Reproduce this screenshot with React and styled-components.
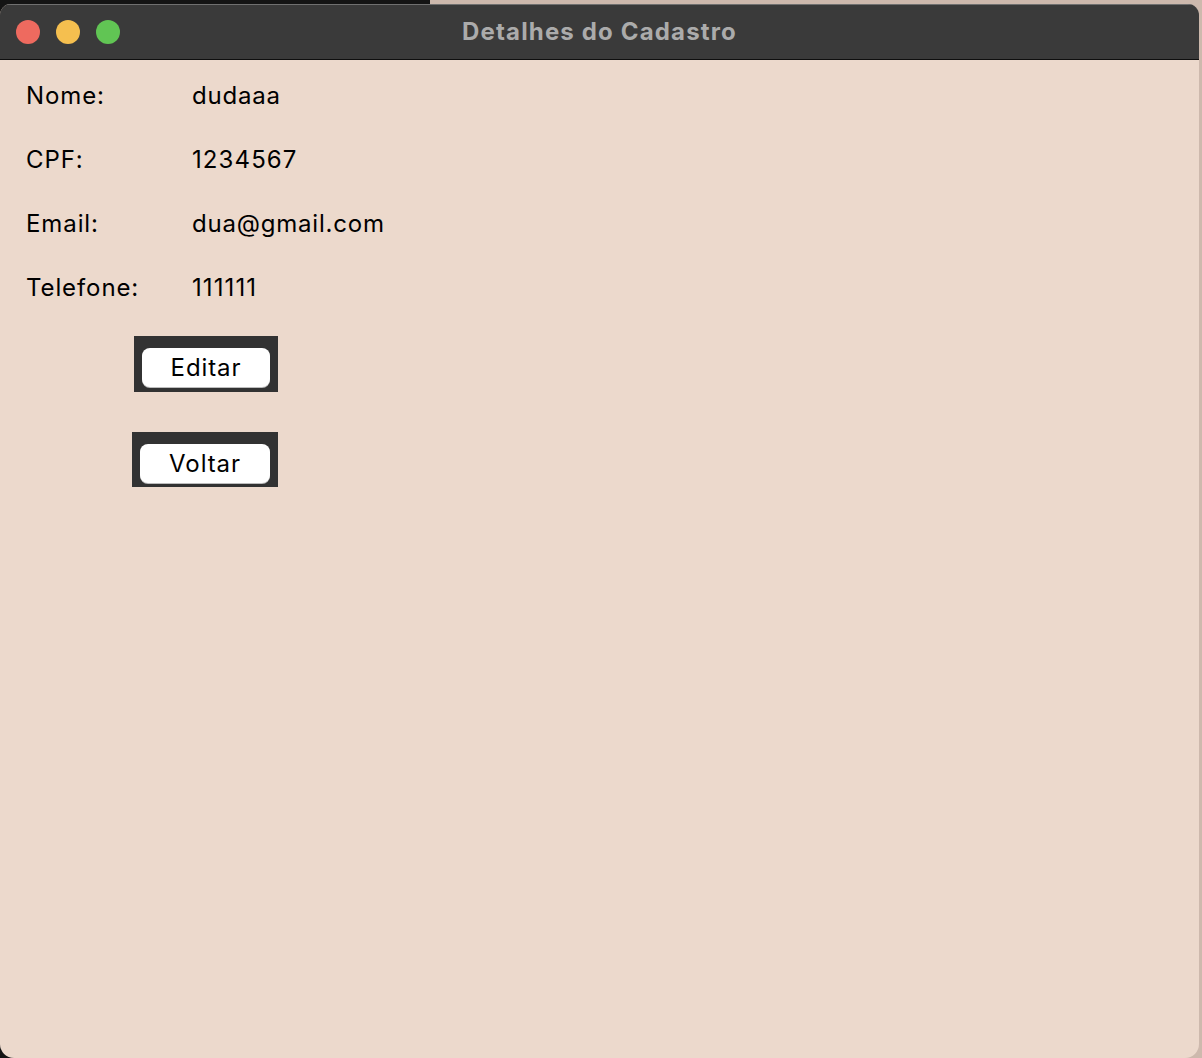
import React from "react";
import styled, { createGlobalStyle } from "styled-components";

const GlobalStyle = createGlobalStyle`
  html, body {
    margin: 0;
    padding: 0;
    height: 100%;
    background: #161616;
    overflow: hidden;
  }
  #root {
    height: 100%;
  }
`;

const Screen = styled.div`
  height: 1058px;
  width: 1202px;
  display: flex;
  flex-direction: column;
  background: linear-gradient(to right, #141414 0, #141414 430px, #cdb9ad 430px);
`;

const Window = styled.div`
  margin-top: 4px;
  width: 1199px;
  flex: 1;
  display: flex;
  flex-direction: column;
  border-radius: 11px 11px 14px 14px;
  overflow: hidden;
  background: #ecd9cc;
  font-family: Inter, "Liberation Sans", sans-serif;
`;

const TitleBar = styled.div`
  height: 56px;
  box-sizing: border-box;
  background: #3a3a3a;
  border-top: 1px solid #707070;
  border-bottom: 1px solid #0e0e0e;
  display: flex;
  align-items: center;
  position: relative;
  padding-left: 16px;
`;

const Lights = styled.div`
  display: flex;
  gap: 16px;
`;

const Light = styled.span`
  width: 24px;
  height: 24px;
  border-radius: 50%;
  background: ${(p) => p.color};
`;

const Title = styled.div`
  position: absolute;
  left: 0;
  right: 0;
  top: 0;
  bottom: 2px;
  display: flex;
  align-items: center;
  justify-content: center;
  color: #ababab;
  font-size: 24px;
  font-weight: 700;
  letter-spacing: 1.15px;
`;

const Content = styled.div`
  padding: 3px 0 0 26px;
  color: #000;
  font-size: 24px;
  letter-spacing: 0.8px;
`;

const Fields = styled.div`
  display: grid;
  grid-template-columns: 166px auto;
  grid-auto-rows: 64px;
  align-items: center;
`;

const Label = styled.span`
  letter-spacing: 0.9px;
`;

const Value = styled.span`
  letter-spacing: ${(p) => (p.numeric ? "1.1px" : "0.8px")};
`;

const Buttons = styled.div`
  display: flex;
  flex-direction: column;
  align-items: flex-start;
  gap: 40px;
  margin-top: 17px;
`;

const ButtonFrame = styled.div`
  background: #323232;
  padding: 12px 8px ${(p) => p.bottom}px;
  margin-left: ${(p) => p.left}px;
`;

const Button = styled.button`
  width: ${(p) => p.width}px;
  height: 39px;
  border: none;
  border-radius: 8px;
  background: #fff;
  box-shadow: 0 1px 0 #bdbdbd;
  font-family: Inter, "Liberation Sans", sans-serif;
  font-size: 24px;
  letter-spacing: 0.9px;
  color: #000;
  padding: 0;
`;

const fields = [
  ["Nome:", "dudaaa"],
  ["CPF:", "1234567"],
  ["Email:", "dua@gmail.com"],
  ["Telefone:", "111111"],
];

export default function App() {
  return (
    <Screen>
      <GlobalStyle />
      <Window>
        <TitleBar>
          <Lights>
            <Light color="#ee6a5f" />
            <Light color="#f5bf4f" />
            <Light color="#61c554" />
          </Lights>
          <Title>Detalhes do Cadastro</Title>
        </TitleBar>
        <Content>
          <Fields>
            {fields.map(([label, value]) => (
              <React.Fragment key={label}>
                <Label>{label}</Label>
                <Value numeric={/^\d+$/.test(value)}>{value}</Value>
              </React.Fragment>
            ))}
          </Fields>
          <Buttons>
            <ButtonFrame left={108} bottom={5}>
              <Button width={128}>Editar</Button>
            </ButtonFrame>
            <ButtonFrame left={106} bottom={4}>
              <Button width={130}>Voltar</Button>
            </ButtonFrame>
          </Buttons>
        </Content>
      </Window>
    </Screen>
  );
}
